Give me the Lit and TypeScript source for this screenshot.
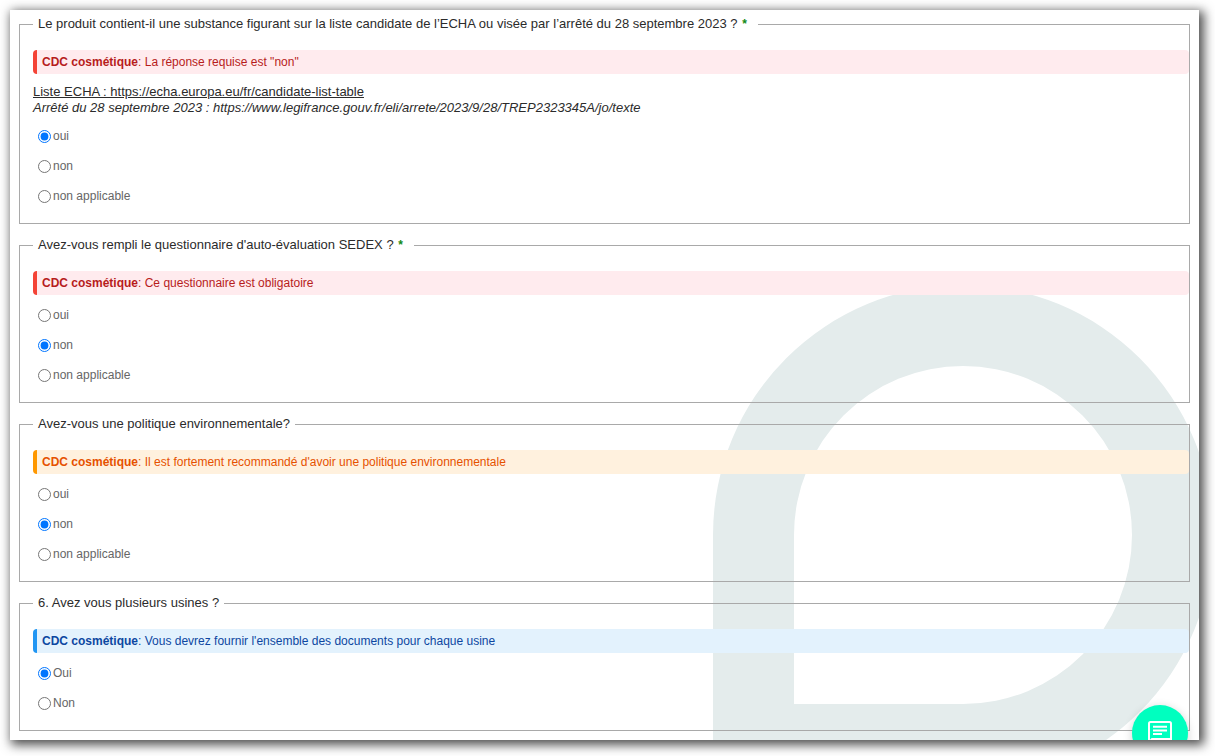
import { LitElement, html, css, svg, nothing } from "lit";
import { customElement, property } from "lit/decorators.js";

type Level = "error" | "warning" | "info";

interface Question {
  id: string;
  title: string;
  required?: boolean;
  level: Level;
  message: string;
  help?: boolean;
  options: string[];
  selected: number;
}

const QUESTIONS: Question[] = [
  {
    id: "echa",
    title:
      "Le produit contient-il une substance figurant sur la liste candidate de l’ECHA ou visée par l’arrêté du 28 septembre 2023 ?",
    required: true,
    level: "error",
    message: 'La réponse requise est "non"',
    help: true,
    options: ["oui", "non", "non applicable"],
    selected: 0,
  },
  {
    id: "sedex",
    title: "Avez-vous rempli le questionnaire d'auto-évaluation SEDEX ?",
    required: true,
    level: "error",
    message: "Ce questionnaire est obligatoire",
    options: ["oui", "non", "non applicable"],
    selected: 1,
  },
  {
    id: "environnement",
    title: "Avez-vous une politique environnementale?",
    level: "warning",
    message:
      "Il est fortement recommandé d'avoir une politique environnementale",
    options: ["oui", "non", "non applicable"],
    selected: 1,
  },
  {
    id: "usines",
    title: "6. Avez vous plusieurs usines ?",
    level: "info",
    message:
      "Vous devrez fournir l'ensemble des documents pour chaque usine",
    options: ["Oui", "Non"],
    selected: 0,
  },
];

@customElement("question-block")
export class QuestionBlock extends LitElement {
  @property({ attribute: false }) question!: Question;

  static styles = css`
    :host {
      display: block;
    }
    .block {
      margin: 0;
      padding: 18px 0 12px 13px;
      border: 1px solid #a9a9a9;
      min-width: 0;
    }
    .title {
      padding: 0 5px;
      font-size: 13px;
      line-height: 16px;
      color: #2b2b2b;
    }
    .star {
      margin: 0 6px 0 1px;
      font-size: 12px;
      font-weight: bold;
      line-height: 12px;
      color: #138a13;
    }
    .alert {
      padding: 0 5px;
      border-left: 4px solid;
      border-radius: 4px;
      font-size: 12px;
      line-height: 24px;
    }
    .error {
      background: #ffebee;
      border-color: #f44336;
      color: #b71c1c;
    }
    .warning {
      background: #fff1de;
      border-color: #ff9800;
      color: #e65100;
    }
    .info {
      background: #e3f2fd;
      border-color: #2196f3;
      color: #0d47a1;
    }
    .help {
      padding: 10px 0 0;
      font-size: 13px;
      line-height: 16px;
      color: #2b2b2b;
    }
    .link {
      color: inherit;
      text-decoration: underline;
    }
    .options {
      padding-top: 5px;
    }
    .option {
      display: flex;
      align-items: center;
      height: 30px;
    }
    .radio {
      width: 13px;
      height: 13px;
      margin: 1px 2px 0 5px;
    }
    .label {
      font-size: 12px;
      line-height: 16px;
      color: #666;
    }
  `;

  render() {
    const q = this.question;
    return html`
      <fieldset class="block">
        <legend class="title">
          ${q.title}${q.required
            ? html` <span class="star">*</span>`
            : nothing}
        </legend>
        <div class="alert ${q.level}">
          <strong>CDC cosmétique</strong>: ${q.message}
        </div>
        ${q.help
          ? html`<div class="help">
              <a class="link" href="https://echa.europa.eu/fr/candidate-list-table"
                >Liste ECHA : https://echa.europa.eu/fr/candidate-list-table</a
              ><br />
              <em
                >Arrêté du 28 septembre 2023 :
                https://www.legifrance.gouv.fr/eli/arrete/2023/9/28/TREP2323345A/jo/texte</em
              >
            </div>`
          : nothing}
        <div class="options">
          ${q.options.map(
            (text, i) => html`<div class="option">
              <input
                class="radio"
                type="radio"
                id="${q.id}-${i}"
                name=${q.id}
                .checked=${i === q.selected}
              />
              <label class="label" for="${q.id}-${i}">${text}</label>
            </div>`
          )}
        </div>
      </fieldset>
    `;
  }
}

@customElement("app-root")
export class AppRoot extends LitElement {
  static styles = css`
    :host {
      display: flex;
      box-sizing: border-box;
      height: 100vh;
      padding: 10px 16px 16px 10px;
      background: #fff;
      font-family: "Liberation Sans", Arial, sans-serif;
    }
    .panel {
      position: relative;
      flex: 1;
      overflow: hidden;
      background: #fff;
      box-shadow: 3px 3px 10px 2px #000000b0;
    }
    .watermark {
      position: absolute;
      right: -14px;
      bottom: -45px;
      width: 500px;
      height: 500px;
      fill: #e4ecec;
    }
    .form {
      position: relative;
      display: flex;
      flex-direction: column;
      gap: 13px;
      padding: 6px 9px;
    }
    .chat {
      position: absolute;
      right: 11px;
      bottom: -21px;
      display: flex;
      align-items: flex-start;
      justify-content: center;
      width: 56px;
      height: 56px;
      padding: 16px 0 0;
      border: 0;
      border-radius: 50%;
      background: #00ffbf;
      box-shadow: 0 2px 10px #00000030;
    }
  `;

  render() {
    return html`
      <main class="panel">
        ${svg`<svg class="watermark" viewBox="0 0 500 500" aria-hidden="true">
          <path fill-rule="evenodd" d="M0 500V250A250 250 0 1 1 250 500ZM81 419V250A169 169 0 1 1 250 419Z"/>
        </svg>`}
        <form class="form">
          ${QUESTIONS.map(
            (q) => html`<question-block .question=${q}></question-block>`
          )}
        </form>
        <button class="chat" type="button" aria-label="Messages">
          <svg width="24" height="24" viewBox="0 0 24 24" fill="none" stroke="#fff" stroke-width="2">
            <path d="M1 21V2.500Q1 1 2.500 1H21.500Q23 1 23 2.500V18H4L1 21Z" />
            <path d="M5 5.700H19M5 9.400H19M5 13H14" />
          </svg>
        </button>
      </main>
    `;
  }
}
